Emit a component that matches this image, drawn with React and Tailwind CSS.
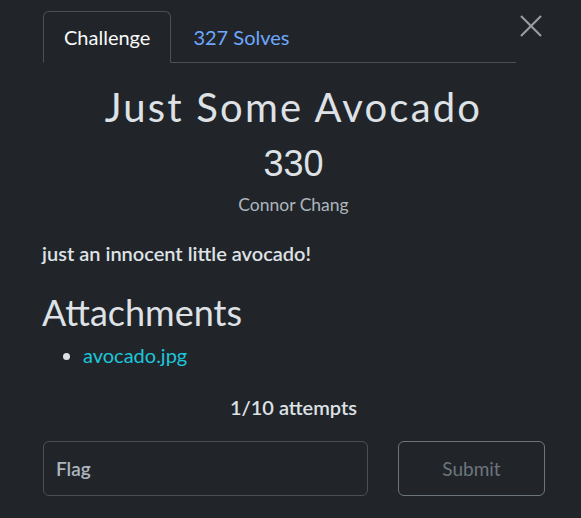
export default function App() {
  return (
    <div className="w-[581px] h-[518px] bg-[#212529] text-[#dee2e6] overflow-hidden" style={{ fontFamily: "Lato, 'Liberation Sans', sans-serif" }}>
      <div className="flex items-start pl-[43px] pr-[39px] pt-[11px]">
        <div className="flex flex-1 border-b border-[#495057]">
          <div className="h-[52px] -mb-px px-[20px] flex items-center border border-[#495057] border-b-[#212529] rounded-t-[6px] text-[20px] text-[#f8f9fa]">
            Challenge
          </div>
          <div className="h-[51px] px-[22px] flex items-center text-[20px] text-[#6ea8fe]">327 Solves</div>
        </div>
        <button className="ml-[4px] mt-[4px] w-[22px] h-[22px] flex items-center justify-center text-[#9a9ca0]">
          <svg width="22" height="22" viewBox="0 0 22 22" stroke="currentColor" strokeWidth="2.2">
            <line x1="1" y1="1" x2="21" y2="21" />
            <line x1="21" y1="1" x2="1" y2="21" />
          </svg>
        </button>
      </div>
      <div className="pl-[42px] pr-[36px]">
        <h1 className="text-center text-[40px] tracking-[2.2px] leading-none mt-[24px]">Just Some Avocado</h1>
        <div className="text-center text-[36px] leading-none mt-[19px]" style={{ fontFamily: "'Liberation Sans', Arial, sans-serif" }}>330</div>
        <div className="text-center text-[17.5px] text-[#adb5bd] mt-[10px]">Connor Chang</div>
        <p className="text-[20px] font-semibold mt-[23px] leading-tight">just an innocent little avocado!</p>
        <h2 className="text-[36px] mt-[24px] leading-tight">Attachments</h2>
        <ul className="list-disc pl-[41px] mt-[5px] text-[20px] marker:text-[#dee2e6]">
          <li><a className="text-[#1dc5da]">avocado.jpg</a></li>
        </ul>
        <div className="text-center font-semibold text-[20px] mt-[25px] leading-tight">1/10 attempts</div>
        <div className="flex mt-[21px] pl-px">
          <div className="w-[325px] shrink-0 h-[55px] rounded-[6px] border border-[#495057] flex items-center px-[12px] text-[19px] font-semibold text-[#adb5bd]">Flag</div>
          <button className="ml-[30px] w-[147px] shrink-0 h-[55px] rounded-[6px] border border-[#6c757d] text-[19px] text-[#6c757d]">Submit</button>
        </div>
      </div>
    </div>
  );
}
